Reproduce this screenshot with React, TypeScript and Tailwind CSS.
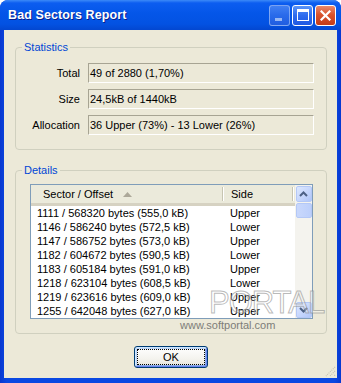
import React from "react";

const rows = [
  ["1111 / 568320 bytes (555,0 kB)", "Upper"],
  ["1146 / 586240 bytes (572,5 kB)", "Lower"],
  ["1147 / 586752 bytes (573,0 kB)", "Upper"],
  ["1182 / 604672 bytes (590,5 kB)", "Lower"],
  ["1183 / 605184 bytes (591,0 kB)", "Upper"],
  ["1218 / 623104 bytes (608,5 kB)", "Lower"],
  ["1219 / 623616 bytes (609,0 kB)", "Upper"],
  ["1255 / 642048 bytes (627,0 kB)", "Upper"],
];

const stats = [
  ["Total", "49 of 2880 (1,70%)"],
  ["Size", "24,5kB of 1440kB"],
  ["Allocation", "36 Upper (73%) - 13 Lower (26%)"],
];

function TitleButtons() {
  return (
    <div className="flex gap-[2px]">
      <div className="w-[21px] h-[21px] rounded-[3px] border border-white/60 bg-[linear-gradient(180deg,#5a8ff5_0%,#3a74ec_50%,#2e63e0_100%)] opacity-70 flex items-end pl-[5px] pb-[4px]">
        <div className="w-[7px] h-[3px] bg-white/80" />
      </div>
      <div className="w-[21px] h-[21px] rounded-[3px] border border-white bg-[linear-gradient(180deg,#5b95f9_0%,#2f6cee_50%,#1f59e2_100%)] flex items-center justify-center">
        <div className="w-[12px] h-[12px] border border-white border-t-[3px]" />
      </div>
      <div className="w-[21px] h-[21px] rounded-[3px] border border-white bg-[linear-gradient(180deg,#e98a6c_0%,#d8532e_45%,#c43c18_100%)] flex items-center justify-center">
        <svg width="11" height="11" viewBox="0 0 11 11">
          <path d="M1.5 1.5 L9.5 9.5 M9.5 1.5 L1.5 9.5" stroke="white" strokeWidth="2.2" strokeLinecap="square" />
        </svg>
      </div>
    </div>
  );
}

function ScrollBtn({ down }: { down?: boolean }) {
  return (
    <div className="w-[16px] h-[16px] rounded-[2px] border border-[#b4c8f6] bg-[linear-gradient(135deg,#dde8fe_0%,#c3d4fc_60%,#b0c6f8_100%)] flex items-center justify-center">
      <svg width="9" height="6" viewBox="0 0 9 6">
        <path
          d={down ? "M1 1 L4.5 4.5 L8 1" : "M1 5 L4.5 1.5 L8 5"}
          stroke="#4d6185"
          strokeWidth="2"
          fill="none"
        />
      </svg>
    </div>
  );
}

function Group({ title, children, className }: { title: string; children: React.ReactNode; className?: string }) {
  return (
    <fieldset className={"border border-[#d0d0bf] rounded-[4px] " + (className || "")}>
      <legend className="ml-[6px] px-[2px] leading-[13px] text-[#0046d5]">{title}</legend>
      {children}
    </fieldset>
  );
}

export default function App() {
  return (
    <div className="w-[341px] h-[383px] bg-white font-['Liberation_Sans',Arial,sans-serif] text-[11px] text-black">
      <div className="h-full flex flex-col rounded-t-[8px] overflow-hidden bg-[linear-gradient(90deg,#0838d0_0%,#0a48e2_2%,#0a48e2_98%,#0838d0_100%)]">
        <div className="h-[30px] shrink-0 flex items-center justify-between pl-[8px] pr-[5px] bg-[linear-gradient(180deg,#3c8af8_0%,#0c5df0_10%,#0456e8_45%,#0352e2_80%,#0347d0_100%)]">
          <span className="font-bold text-[12.5px] text-white [text-shadow:1px_1px_0_#0a1e8a] tracking-[0.1px]">
            Bad Sectors Report
          </span>
          <TitleButtons />
        </div>

        <div className="relative flex-1 mx-[4px] mb-[5px] bg-[#ece9d8] pt-[11px] pl-[11px] pr-[10px]">
          <Group title="Statistics">
            <div className="flex flex-col gap-[6px] pt-[9px] pb-[14px]">
              {stats.map(([k, v]) => (
                <div key={k} className="flex items-center">
                  <span className="w-[64px] shrink-0 text-right">{k}</span>
                  <div className="ml-[8px] mr-[12px] flex-1 h-[20px] border border-t-[#a7a493] border-l-[#a7a493] border-b-white border-r-white leading-[18px] pl-[1px] whitespace-nowrap">
                    {v}
                  </div>
                </div>
              ))}
            </div>
          </Group>

          <Group title="Details" className="mt-[14px]">
            <div className="pt-[7px] pb-[14px] pl-[14px]">
              <div className="w-[283px] h-[135px] border border-[#7f9db9] bg-white flex overflow-hidden">
                <div className="flex-1 flex flex-col">
                  <div className="h-[21px] shrink-0 flex bg-[#ebeadb] border-b-[3px] border-[#d6d2c2]">
                    <div className="w-[193px] flex items-center pl-[12px] relative">
                      <span>Sector / Offset</span>
                      <svg className="ml-[10px]" width="9" height="5" viewBox="0 0 9 5">
                        <polygon points="0,5 4.5,0 9,5" fill="#aca899" />
                      </svg>
                      <div className="ml-auto h-[14px] w-[2px] border-l border-[#c7c5b2] border-r border-r-white" />
                    </div>
                    <div className="w-[70px] flex items-center pl-[7px]">
                      <span>Side</span>
                      <div className="ml-auto h-[14px] w-[2px] border-l border-[#c7c5b2] border-r border-r-white" />
                    </div>
                  </div>
                  {rows.map(([a, b]) => (
                    <div key={a} className="h-[14px] shrink-0 flex leading-[14px] whitespace-nowrap">
                      <div className="w-[193px] pl-[6px]">{a}</div>
                      <div className="w-[70px] pl-[6px]">{b}</div>
                    </div>
                  ))}
                </div>
                <div className="w-[17px] shrink-0 flex flex-col bg-[#f4f3ee] p-[0.5px]">
                  <ScrollBtn />
                  <div className="mt-[1px] w-[16px] h-[15px] rounded-[2px] border border-[#b4c8f6] bg-[linear-gradient(90deg,#c9d8fc_0%,#bccffb_100%)]" />
                  <div className="flex-1" />
                  <ScrollBtn down />
                </div>
              </div>
            </div>
          </Group>

          <div className="flex justify-center mt-[12px]">
            <button className="w-[74px] h-[22px] rounded-[3px] border border-[#003c74] bg-[linear-gradient(180deg,#ffffff_0%,#f4f3ee_60%,#e3e1d6_100%)] shadow-[inset_1px_1px_0_#cee7ff,inset_-1px_-1px_0_#6982ee,inset_2px_2px_0_#bcd4f6,inset_-2px_-2px_0_#89ade4] p-[2px]">
              <span className="h-full w-full flex items-center justify-center border border-dotted border-black text-[11px]">
                OK
              </span>
            </button>
          </div>

          <span className="absolute left-[205px] top-[257px] text-[31px] leading-none tracking-[-1px] text-white/30 [-webkit-text-stroke:1px_rgba(140,140,140,0.6)] pointer-events-none">
            PORTAL
          </span>
          <span className="absolute left-[176px] top-[289px] leading-[12px] text-[#7d7d78] pointer-events-none">
            www.softportal.com
          </span>

          <svg className="absolute right-[1px] bottom-[1px]" width="12" height="12" viewBox="0 0 12 12">
            <path d="M11 2 L2 11 M11 6 L6 11 M11 10 L10 11" stroke="#c5c2b2" strokeWidth="1.2" strokeDasharray="1 1" />
          </svg>
        </div>
      </div>
    </div>
  );
}
